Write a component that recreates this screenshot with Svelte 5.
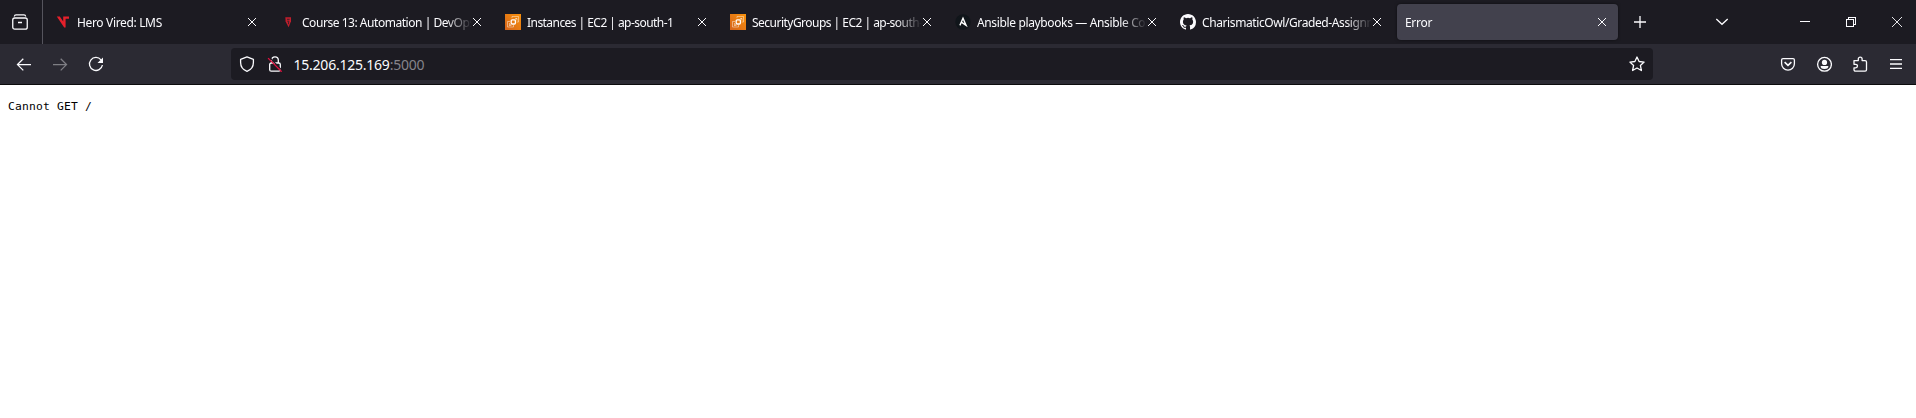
<script>
  const tabs = [
    { title: 'Hero Vired: LMS', icon: 'hero', tracking: -0.34 },
    { title: 'Course 13: Automation | DevOps', icon: 'course', tracking: -0.46 },
    { title: 'Instances | EC2 | ap-south-1', icon: 'ec2', tracking: -0.55 },
    { title: 'SecurityGroups | EC2 | ap-south-1', icon: 'ec2', tracking: -0.52 },
    { title: 'Ansible playbooks — Ansible Community', icon: 'ansible', tracking: -0.36 },
    { title: 'CharismaticOwl/Graded-Assignment', icon: 'github', tracking: -0.4 },
    { title: 'Error', active: true, tracking: -0.3 }
  ];
</script>

{#snippet favicon(name)}
  <svg class="fav" viewBox="0 0 16 16">
    {#if name === 'hero'}
      <path d="M1.8 2.6h3l3.4 4.8V2.6h5.8v2.2h-3.4v8.6H9.2Z" fill="#e5202b" />
    {:else if name === 'course'}
      <path d="M5.3 3.2h5.7v4L8.6 13.2 5.6 7.6Z" fill="#c01e2c" />
      <path d="M7 5.3h2.6M7.2 7.2h1.6l-.4 3" fill="none" stroke="#40202a" />
    {:else if name === 'ec2'}
      <defs><linearGradient id="orange" x1="0" y1="1" x2="1" y2="0"><stop stop-color="#d5631a" /><stop offset="1" stop-color="#f9920c" /></linearGradient></defs>
      <path d="M0 0h16v16H0Z" fill="url(#orange)" />
      <g fill="none" stroke="#fff">
        <rect class="chip" x="6.2" y="5.8" width="4.2" height="4.2" rx="1" />
        <path class="outline" d="M5 7.5H2.5V13h6v-2.2M7 4V2.5h6.5V8h-1.8M4.5 9v2.5h2M10 4.5h2v2M10.3 5.8 12 4.3M6.2 10l-1.7 1.5" />
      </g>
    {:else if name === 'ansible'}
      <circle cx="8" cy="8" r="7.7" fill="#10151a" />
      <path class="mark" d="M4.9 11.4 8 4.2l3.1 7.2L6.3 8.2" fill="none" stroke="#fff" />
    {:else}
      <path fill="#fbfbfe" d="M8 0C3.58 0 0 3.58 0 8c0 3.54 2.29 6.53 5.47 7.59.4.07.55-.17.55-.38v-1.49c-2.01.37-2.53-.49-2.69-.94-.09-.23-.48-.94-.82-1.13-.28-.15-.68-.52-.01-.53.63-.01 1.08.58 1.23.82.72 1.21 1.87.87 2.33.66.07-.52.28-.87.51-1.07-1.78-.2-3.64-.89-3.64-3.95 0-.87.31-1.59.82-2.15-.08-.2-.36-1.02.08-2.12 0 0 .67-.21 2.2.82a7.4 7.4 0 0 1 4 0c1.53-1.04 2.2-.82 2.2-.82.44 1.1.16 1.92.08 2.12.51.56.82 1.27.82 2.15 0 3.07-1.87 3.75-3.65 3.95.29.25.54.73.54 1.48v2.2c0 .21.15.46.55.38A8 8 0 0 0 16 8c0-4.42-3.58-8-8-8Z" />
    {/if}
  </svg>
{/snippet}

<div class="browser">
  <header class="tabbar">
    <div class="recent">
      <svg viewBox="0 0 16 16"><rect x=".75" y="4" width="14.5" height="11.2" rx="2" /><path d="M2.3 2.5C2.5 1.2 3 .8 4 .8h8c1 0 1.5.4 1.7 1.7M6 8.5h4" /></svg>
    </div>
    <div class="tabs">
      {#each tabs as tab}
        <div class="tab" class:active={tab.active}>
          {#if tab.icon}{@render favicon(tab.icon)}{/if}
          <span class="title" style:letter-spacing="{tab.tracking}px">{tab.title}</span>
          <svg class="close" viewBox="0 0 10 10"><path d="m1 1 8 8M9 1 1 9" /></svg>
        </div>
      {/each}
    </div>
    <svg class="plus" viewBox="0 0 16 16"><path d="M8 2v12M2 8h12" /></svg>
    <div class="controls">
      <svg class="list" viewBox="0 0 16 16"><path d="m2.3 5 5.7 5.3L13.7 5" /></svg>
      <svg viewBox="0 0 16 16" class="crisp"><path d="M3 7.5h10" /></svg>
      <svg viewBox="0 0 16 16" class="crisp"><path d="M3.5 5.5h7v7h-7zM5.5 5V3.5h7v7H11" /></svg>
      <svg viewBox="0 0 16 16" class="thin"><path d="m3 3 10 10M13 3 3 13" /></svg>
    </div>
  </header>

  <nav class="toolbar">
    <div class="history">
      <svg viewBox="0 0 16 16"><path d="M15 8.6H1.6M7.3 2.8 1.5 8.6l5.8 5.8" /></svg>
      <svg class="disabled" viewBox="0 0 16 16"><path d="M1 8.6h13.4M8.7 2.8l5.8 5.8-5.8 5.8" /></svg>
      <svg viewBox="0 0 16 16"><path d="M13 3.8A6.5 6.5 0 1 0 14.4 9" /><path class="solid" d="M15 1.5V7H9.5Z" /></svg>
    </div>
    <div class="urlbar">
      <svg viewBox="0 0 16 16"><path d="M8 .9 14.4 3.3v3.2c0 4-2.2 7.2-6.4 8.8-4.2-1.6-6.4-4.8-6.4-8.8V3.3Z" stroke-linejoin="round" /></svg>
      <svg class="lock" viewBox="0 0 16 16"><rect x="2.7" y="7" width="10.6" height="8.2" rx="1.5" /><path d="M4.7 7V4.1a3.3 3.3 0 0 1 6.6 0V7" /><path d="m2.2 1 13 13.6" class="cut" /><path d="m1.1 2.1 13.6 13.6" class="slash" /></svg>
      <div class="address">15.206.125.169<span>:5000</span></div>
      <svg class="star" viewBox="0 0 16 16"><path d="m8 1 2.1 4.5 5 .6-3.7 3.3 1 5.1L8 12l-4.4 2.5 1-5.1L.9 6.1l5-.6Z" stroke-linejoin="round" /></svg>
    </div>
    <div class="actions">
      <svg viewBox="0 0 16 16"><path d="M3 2.6h10q1.4 0 1.4 1.4v3.8a6.4 6.4 0 0 1-12.8 0V4Q1.6 2.6 3 2.6Z" /><path d="m4.6 6.2 3.4 3.2 3.4-3.2" stroke-width="1.6" /></svg>
      <svg viewBox="0 0 16 16"><circle cx="8.5" cy="8.3" r="6.9" /><circle class="solid" cx="8.5" cy="6.4" r="2.6" /><path class="solid" d="M4.7 10h7.6q.4 2.8-3.8 3-4.2-.2-3.8-3Z" /></svg>
      <svg viewBox="0 0 16 16"><path d="M2 4.6h4.3V3a1.9 1.9 0 0 1 3.8 0v1.6h3q1.4 0 1.4 1.4v7.8q0 1.4-1.4 1.4H3.5Q2 15.2 2 13.8v-2h1.7a1.7 1.7 0 0 0 0-3.5H2Z" stroke-linejoin="round" /></svg>
      <svg viewBox="0 0 16 16"><path d="M2 3.6h12M2 8h12M2 12.4h12" /></svg>
    </div>
  </nav>
  <main><pre>Cannot GET /</pre></main>
</div>

<style>
  .browser { width: 1916px; height: 418px; overflow: hidden; background: #fff; color: #fbfbfe; font-family: 'Noto Sans', sans-serif; display: flex; flex-direction: column; }
  svg { width: 16px; height: 16px; flex: none; fill: none; stroke: #fbfbfe; stroke-width: 1.3; display: block; }
  .tabbar { height: 44px; background: #1c1b22; display: flex; align-items: center; flex: none; }
  .recent { width: 42px; height: 44px; border-right: 1px solid #55545d; display: flex; align-items: center; }
  .recent svg { margin-left: 12px; }
  .tabs { display: flex; gap: 4px; margin-left: 4px; }
  .tab { width: 221px; height: 36px; box-sizing: border-box; padding: 0 11px 0 8px; border-radius: 4px; display: flex; align-items: center; }
  .active { background: #42414d; box-shadow: 0 0 3px #0008; }
  .tab .fav { stroke: none; margin-right: 6px; }
  .fav [stroke] { stroke-width: 1; }
  .fav .chip { stroke-width: 1.3; }
  .fav .outline { stroke-width: .8; opacity: .55; }
  .fav .mark { stroke-width: 1.4; }
  .title { flex: 1; min-width: 0; overflow: hidden; white-space: nowrap; font-size: 12px; line-height: 18px; padding-top: 2px; mask-image: linear-gradient(to left, transparent, #000 26px); }
  .close { width: 10px; height: 10px; stroke-width: 1; }
  .plus { margin-left: 14px; }
  .controls { margin-left: auto; margin-right: 11px; display: flex; gap: 30px; }
  .list { margin-right: 37px; }
  .crisp { shape-rendering: crispEdges; stroke-width: 1; }
  .thin { stroke-width: .9; }
  .toolbar { height: 40px; background: #2b2a33; border-bottom: 1px solid #0c0c0d; display: flex; align-items: center; flex: none; }
  .history { width: 215px; padding-left: 16px; display: flex; gap: 20px; }
  .disabled { opacity: .4; }
  .solid { fill: #fbfbfe; stroke: none; }
  .urlbar { width: 1422px; height: 32px; border-radius: 4px; background: #1c1b22; box-sizing: border-box; padding: 0 8px; display: flex; align-items: center; }
  .lock { margin-left: 12px; }
  .cut { stroke: #1c1b22; }
  .slash { stroke: #e4103f; }
  .address { flex: 1; margin-left: 10.5px; padding-top: 2px; font-size: 14px; line-height: 20px; letter-spacing: -.23px; }
  .address span { color: #85848b; }
  .actions { margin-left: auto; margin-right: 12px; display: flex; gap: 20px; }
  main { padding: 14px 8px; color: #000; }
  pre { margin: 0; font: 11.3px/16px 'DejaVu Sans Mono', monospace; letter-spacing: .2px; }
  :global(body) { margin: 0; }
</style>
